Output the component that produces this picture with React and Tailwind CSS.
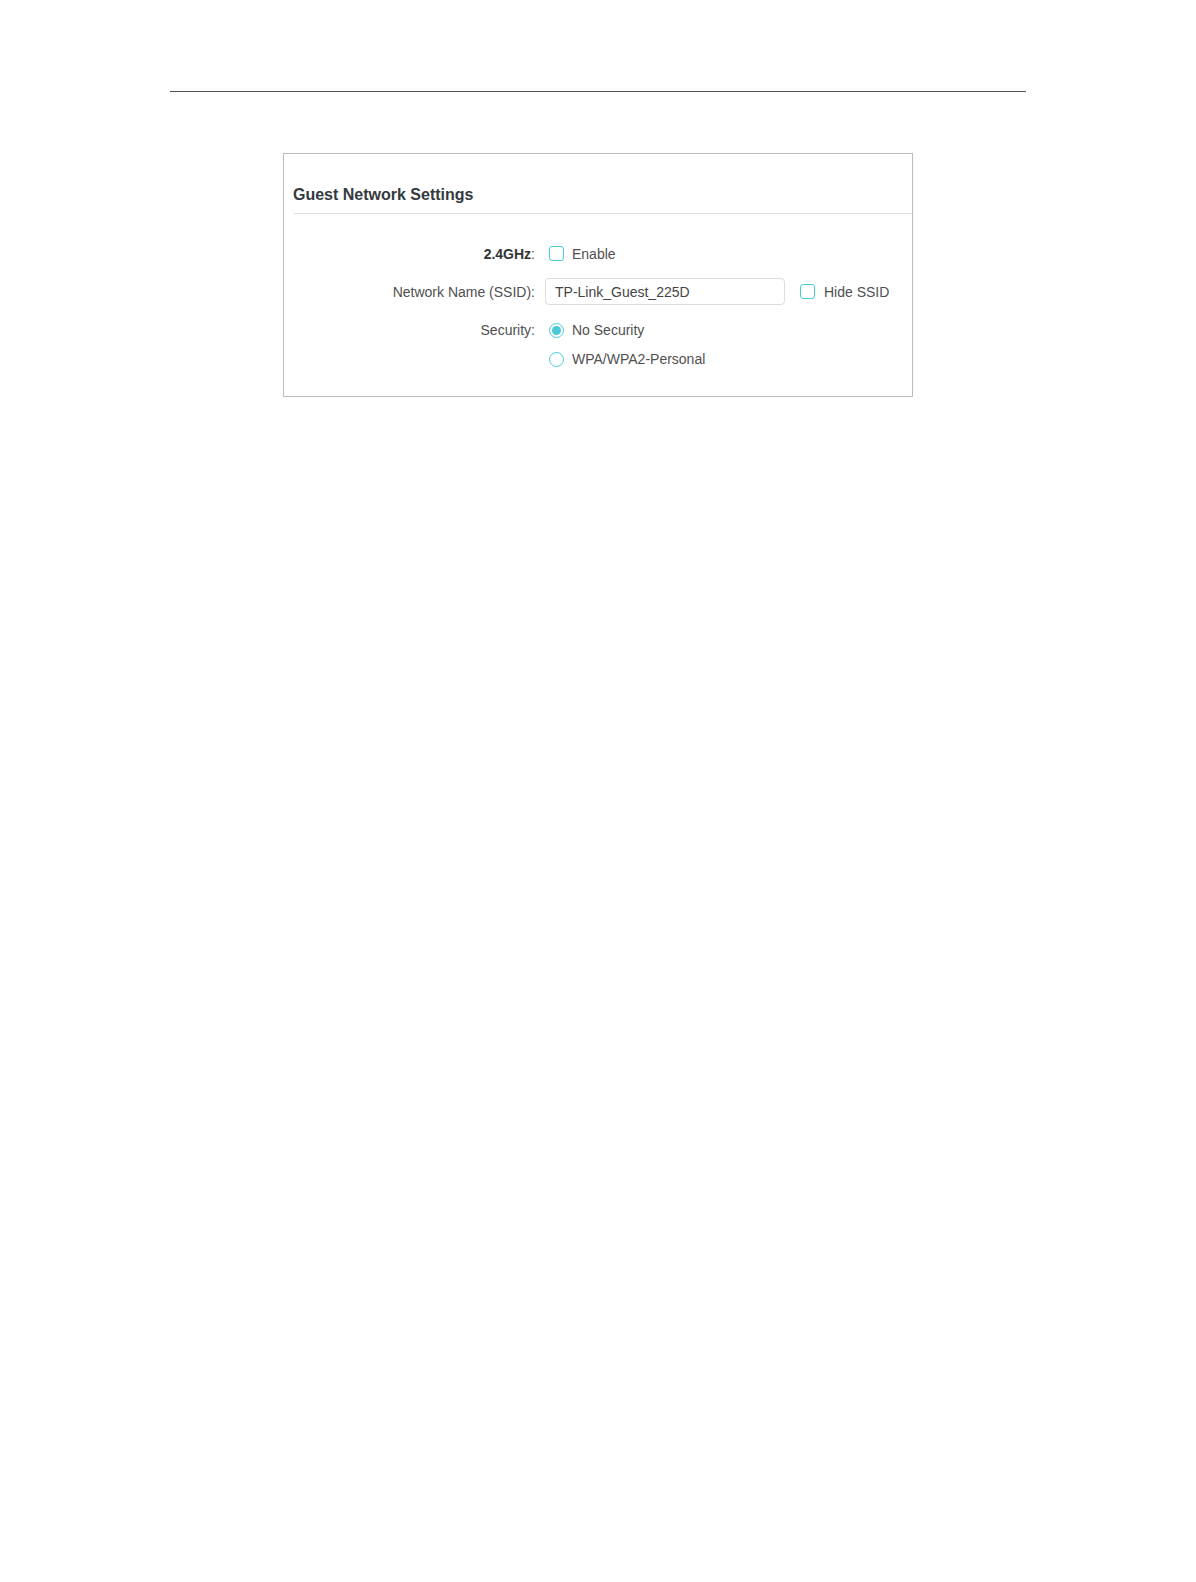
import React, { useState } from 'react';

const TEAL = 'border-[#4acbd6]';

const Checkbox = ({ checked, onChange }) => (
  <button
    type="button"
    onClick={onChange}
    className={`w-[15px] h-[15px] rounded-[3px] border ${TEAL} bg-white flex items-center justify-center`}
  >
    {checked && <span className="w-[7px] h-[7px] rounded-[1px] bg-[#4acbd6]" />}
  </button>
);

const Radio = ({ checked, onChange }) => (
  <button
    type="button"
    onClick={onChange}
    className={`w-[15px] h-[15px] rounded-full border ${TEAL} bg-white flex items-center justify-center`}
  >
    {checked && <span className="w-[9px] h-[9px] rounded-full bg-[#4acbd6]" />}
  </button>
);

const Row = ({ label, className = '', children }) => (
  <div className={`flex items-center ${className}`}>
    <div className="w-[251px] text-right text-[14px] leading-[20px] text-[#4f4f4f]">{label}</div>
    <div className="ml-[10px] flex items-center">{children}</div>
  </div>
);

const App = () => {
  const [enabled, setEnabled] = useState(false);
  const [hideSsid, setHideSsid] = useState(false);
  const [ssid, setSsid] = useState('TP-Link_Guest_225D');
  const [security, setSecurity] = useState('none');

  return (
    <div className="bg-white font-['Liberation_Sans',Arial,sans-serif] pt-[91px] pb-[40px]">
      <div className="mx-[170px] w-[856px] h-px bg-[#505050]" />

      <div className="ml-[283px] mt-[61px] w-[630px] border border-[#bcbcbc] bg-white">
        <h2 className="pl-[9px] pt-[31px] text-[16px] leading-[20px] font-bold text-[#343a40]">
          Guest Network Settings
        </h2>
        <div className="ml-[10px] mt-[8px] h-px bg-[#dcdcdc]" />

        <div className="pt-[29px] pb-[27px]">
          <Row
            className="h-[21px]"
            label={
              <>
                <span className="font-bold text-[#333]">2.4GHz</span>:
              </>
            }
          >
            <span className="ml-[4px] flex items-center">
              <Checkbox checked={enabled} onChange={() => setEnabled(!enabled)} />
              <span className="ml-[8px] text-[14px] leading-[20px] text-[#4f4f4f]">Enable</span>
            </span>
          </Row>

          <Row className="mt-[14px] h-[27px]" label="Network Name (SSID):">
            <input
              value={ssid}
              onChange={(e) => setSsid(e.target.value)}
              className="w-[240px] h-[27px] px-[9px] border border-[#dddddd] rounded-[4px] text-[14px] text-[#444] outline-none"
            />
            <span className="ml-[15px] flex items-center">
              <Checkbox checked={hideSsid} onChange={() => setHideSsid(!hideSsid)} />
              <span className="ml-[9px] text-[14px] leading-[20px] text-[#4f4f4f]">Hide SSID</span>
            </span>
          </Row>

          <Row className="mt-[15px] h-[20px]" label="Security:">
            <span className="ml-[4px] flex items-center">
              <Radio checked={security === 'none'} onChange={() => setSecurity('none')} />
              <span className="ml-[8px] text-[14px] leading-[20px] text-[#4f4f4f]">No Security</span>
            </span>
          </Row>

          <Row className="mt-[9px] h-[20px]" label="">
            <span className="ml-[4px] flex items-center">
              <Radio checked={security === 'wpa'} onChange={() => setSecurity('wpa')} />
              <span className="ml-[8px] text-[14px] leading-[20px] text-[#4f4f4f]">WPA/WPA2-Personal</span>
            </span>
          </Row>
        </div>
      </div>
    </div>
  );
};

export default App;
